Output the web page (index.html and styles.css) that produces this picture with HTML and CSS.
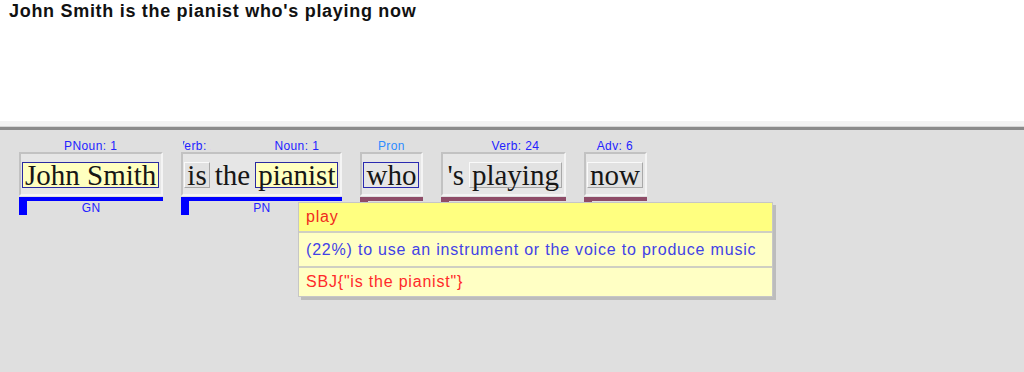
FILE: index.html
```html
<!DOCTYPE html>
<html lang="en">
<head>
    <meta charset="UTF-8">
    <title>Parse</title>
    <link rel="stylesheet" href="styles.css">
</head>
<body>
<div id="sentence">
    <h1>John Smith is the pianist who's playing now</h1>
</div>
<div id="divider"></div>
<div id="workspace">
    <div class="groups">
        <div class="group">
            <div class="box">
                <span class="word tagged"><span class="tag">PNoun: 1</span>John Smith</span>
            </div>
            <div class="bar blue">GN</div>
        </div>
        <div class="group">
            <div class="box">
                <span class="word btn"><span class="tag">Verb: 1</span>is</span>
                <span class="word">the</span>
                <span class="word tagged"><span class="tag">Noun: 1</span>pianist</span>
            </div>
            <div class="bar blue">PN</div>
        </div>
        <div class="group">
            <div class="box">
                <span class="word outlined"><span class="tag pron">Pron</span>who</span>
            </div>
            <div class="bar maroon"></div>
        </div>
        <div class="group">
            <div class="box">
                <span class="word">'s</span>
                <span class="word btn"><span class="tag">Verb: 24</span>playing</span>
            </div>
            <div class="bar maroon"></div>
        </div>
        <div class="group">
            <div class="box">
                <span class="word btn"><span class="tag">Adv: 6</span>now</span>
            </div>
            <div class="bar maroon"></div>
        </div>
    </div>

    <div class="popup">
        <div class="row head">play</div>
        <div class="row gloss">(22%) to use an instrument or the voice to produce music</div>
        <div class="row frame">SBJ{"is the pianist"}</div>
    </div>
</div>
</body>
</html>
```

FILE: styles.css
```css
body{
    margin: 0;
    font-family: "Liberation Sans", Arial, sans-serif;
    background: #dfdfdf;
}
#sentence{
    height: 121px;
    box-sizing: border-box;
    padding: 1px 9px;
    background: #fff;
}
#sentence h1{
    margin: 0;
    font-size: 18px;
    line-height: 20px;
    letter-spacing: 0.7px;
    color: #111;
}
#divider{
    height: 5px;
    background: #f2f2f2;
    border-bottom: 1px solid #d6d6d6;
}
#workspace{
    position: relative;
    height: 242px;
    border-top: 3px solid #8a8a8a;
    background: #dfdfdf;
}
.groups{
    display: flex;
    gap: 18px;
    align-items: flex-start;
    padding: 22px 0 0 19px;
}
.group{
    display: flex;
    flex-direction: column;
}
.box{
    display: flex;
    gap: 2px;
    padding: 8px 2px 6px 1px;
    background: #e6e6e6;
    border: 2px solid;
    border-color: #c2c2c2 #f4f4f4 #f4f4f4 #c2c2c2;
}
.word{
    position: relative;
    height: 24px;
    padding: 0 2px;
    border: 1px solid transparent;
    font-family: "Liberation Serif", "Times New Roman", serif;
    font-size: 29px;
    line-height: 24px;
    color: #161616;
    white-space: nowrap;
}
.tagged{
    background: #ffffc0;
    border-color: #2a2aa0;
}
.outlined{
    border-color: #2a2ab0;
}
.btn{
    background: #e2e2e2;
    border-color: #fafafa #a8a8a8 #a8a8a8 #fafafa;
}
.tag{
    position: absolute;
    left: -2px;
    right: -2px;
    top: -24px;
    display: flex;
    justify-content: center;
    overflow: hidden;
    font-family: "Liberation Sans", Arial, sans-serif;
    font-size: 12px;
    line-height: 14px;
    letter-spacing: 0.4px;
    color: #2323ff;
}
.tag.pron{
    color: #2d8cff;
}
.bar{
    margin-top: 1px;
    height: 14px;
    padding-right: 8px;
    border-top: 4px solid;
    border-left: 8px solid;
    text-align: center;
    font-size: 12px;
    line-height: 14px;
    letter-spacing: 0.4px;
    color: #2323ff;
}
.bar.blue{
    border-color: #0000ff;
}
.bar.maroon{
    border-color: #8e4c68;
}
.popup{
    position: absolute;
    left: 298px;
    top: 72px;
    width: 473px;
    border: 1px solid #c6c6c6;
    box-shadow: 3px 3px 0 #bcbcbc;
    font-size: 16px;
    letter-spacing: 0.8px;
}
.row{
    padding-left: 7px;
    background: #ffffc4;
}
.row + .row{
    border-top: 2px solid #cfcfc2;
}
.head{
    height: 28px;
    line-height: 28px;
    background: #ffff80;
    color: #f02a1e;
}
.gloss{
    height: 33px;
    line-height: 33px;
    color: #4242e6;
}
.frame{
    height: 28px;
    line-height: 28px;
    color: #ff2a2a;
}
```
